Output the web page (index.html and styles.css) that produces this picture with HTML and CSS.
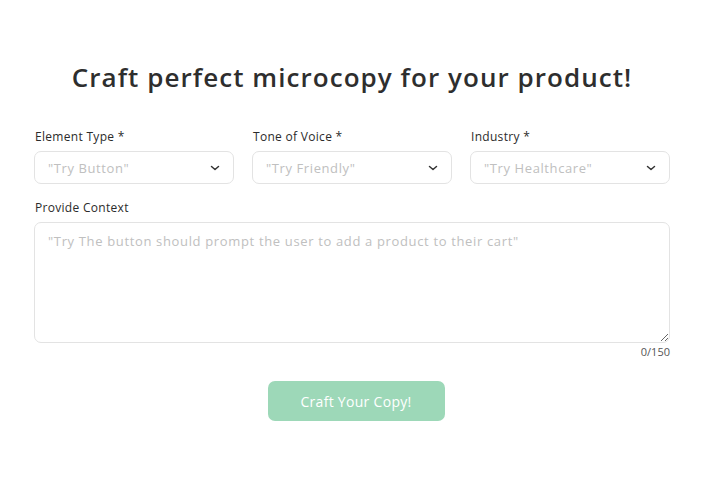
FILE: index.html
```html
<!DOCTYPE html>
<html lang="en">
<head>
<meta charset="utf-8">
<title>Microcopy</title>
<link rel="stylesheet" href="styles.css">
</head>
<body>
<main class="page">
  <h1 class="title">Craft perfect microcopy for your product!</h1>
  <div class="row">
    <div class="field">
      <label class="label">Element Type *</label>
      <div class="select"><span class="ph">"Try Button"</span><svg class="chev" width="10" height="6" viewBox="0 0 10 6"><path d="M1.5 1.5 L5 4.5 L8.5 1.5" fill="none" stroke="#333" stroke-width="1.5" stroke-linecap="round" stroke-linejoin="round"/></svg></div>
    </div>
    <div class="field">
      <label class="label">Tone of Voice *</label>
      <div class="select"><span class="ph">"Try Friendly"</span><svg class="chev" width="10" height="6" viewBox="0 0 10 6"><path d="M1.5 1.5 L5 4.5 L8.5 1.5" fill="none" stroke="#333" stroke-width="1.5" stroke-linecap="round" stroke-linejoin="round"/></svg></div>
    </div>
    <div class="field">
      <label class="label">Industry *</label>
      <div class="select"><span class="ph">"Try Healthcare"</span><svg class="chev" width="10" height="6" viewBox="0 0 10 6"><path d="M1.5 1.5 L5 4.5 L8.5 1.5" fill="none" stroke="#333" stroke-width="1.5" stroke-linecap="round" stroke-linejoin="round"/></svg></div>
    </div>
  </div>
  <div class="field context">
    <label class="label">Provide Context</label>
    <textarea class="area" placeholder="&quot;Try The button should prompt the user to add a product to their cart&quot;"></textarea>
    <div class="count">0/150</div>
  </div>
  <div class="actions">
    <button class="btn">Craft Your Copy!</button>
  </div>
</main>
</body>
</html>
```
FILE: styles.css
```css
* { box-sizing: border-box; }
body {
  margin: 0;
  background: #ffffff;
  font-family: "Open Sans", "Noto Sans", sans-serif;
  color: #2d2d2d;
}
.page {
  width: 636px;
  margin: 0 auto;
  padding-top: 61px;
  display: flex;
  flex-direction: column;
}
.title {
  margin: 0;
  font-size: 26px;
  line-height: 32px;
  font-weight: 600;
  text-align: center;
  color: #2e2e2e;
  letter-spacing: 1.05px;
}
.row {
  margin-top: 36px;
  display: grid;
  grid-template-columns: 200px 200px 200px;
  column-gap: 18px;
}
.field {
  display: flex;
  flex-direction: column;
}
.label {
  font-size: 12px;
  line-height: 16px;
  font-weight: 500;
  color: #2b2b2b;
  padding-left: 1px;
  margin-bottom: 6px;
  letter-spacing: 0.3px;
}
.select {
  height: 33px;
  border: 1px solid #e3e3e3;
  border-radius: 7px;
  display: flex;
  align-items: center;
  justify-content: space-between;
  padding: 0 13px 0 13px;
}
.ph {
  font-size: 13px;
  color: #c0c0c0;
  letter-spacing: 0.6px;
}
.chev { display: block; }
.context { margin-top: 16px; }
.area {
  height: 121px;
  border: 1px solid #e3e3e3;
  border-radius: 7px;
  padding: 9px 13px;
  font-family: inherit;
  font-size: 13px;
  line-height: 18px;
  letter-spacing: 0.65px;
  resize: vertical;
  outline: none;
  color: #2b2b2b;
}
.area::placeholder { color: #c0c0c0; }
.count {
  margin-top: 2px;
  text-align: right;
  font-size: 11px;
  line-height: 14px;
  color: #555;
}
.actions {
  margin-top: 22px;
  display: flex;
  justify-content: center;
  padding-left: 8px;
}
.btn {
  width: 177px;
  height: 40px;
  border: none;
  border-radius: 7px;
  background: #9dd8b8;
  color: #ffffff;
  font-family: inherit;
  font-size: 14px;
  letter-spacing: 0.3px;
}
```
